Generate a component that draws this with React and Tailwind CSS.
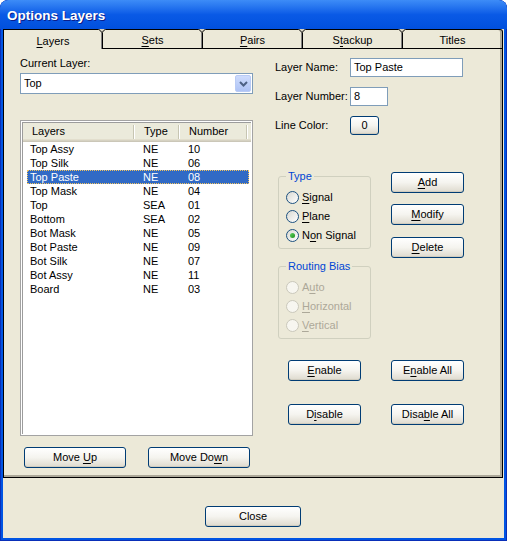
import React from "react";

const U = ({ children }) => (
  <span className="underline decoration-1 underline-offset-[2px]">{children}</span>
);

function Btn({ className = "", children }) {
  return (
    <div
      className={`flex items-center justify-center rounded-[3px] border border-[#003c74] bg-linear-to-b from-white via-[#f5f4ef] to-[#dedace] text-black shadow-[inset_0_-1px_0_#d0ccbf] ${className}`}
    >
      {children}
    </div>
  );
}

function Radio({ checked, disabled, label }) {
  return (
    <div className="flex h-[19px] items-center">
      <div
        className={`flex h-[13px] w-[13px] items-center justify-center rounded-full border ${
          disabled
            ? "border-[#cac8bb] bg-[#f7f6f0]"
            : "border-[#1c5180] bg-linear-to-br from-[#d9d9d2] to-white"
        }`}
      >
        {checked && (
          <div className="h-[5px] w-[5px] rounded-full bg-linear-to-br from-[#5fd35f] to-[#1a8f1a]" />
        )}
      </div>
      <span className={`ml-[3px] leading-[13px] ${disabled ? "text-[#aca899]" : "text-black"}`}>
        {label}
      </span>
    </div>
  );
}

function Group({ title, children }) {
  return (
    <fieldset className="rounded-[3px] border border-[#d0d0bf] px-[7px] pb-[3px]">
      <legend className="px-[2px] leading-[13px] text-[#0046d5]">{title}</legend>
      <div className="pt-[5px]">{children}</div>
    </fieldset>
  );
}

function Notch({ className }) {
  return (
    <svg
      className={`absolute top-0 ${className}`}
      width="8"
      height="5"
      viewBox="0 0 8 5"
    >
      <path d="M0 0 L4 4 L8 0 Z" fill="#d8d4c4" />
      <path d="M0.5 0 L4 3.5 L7.5 0" stroke="#000" strokeWidth="1" fill="none" />
    </svg>
  );
}

const rows = [
  ["Top Assy", "NE", "10"],
  ["Top Silk", "NE", "06"],
  ["Top Paste", "NE", "08"],
  ["Top Mask", "NE", "04"],
  ["Top", "SEA", "01"],
  ["Bottom", "SEA", "02"],
  ["Bot Mask", "NE", "05"],
  ["Bot Paste", "NE", "09"],
  ["Bot Silk", "NE", "07"],
  ["Bot Assy", "NE", "11"],
  ["Board", "NE", "03"],
];

function HeaderCell({ w, label }) {
  return (
    <div className={`flex items-center justify-between ${w}`}>
      <span className="pl-[9px] pb-[2px]">{label}</span>
      <div className="mb-[2px] h-[14px] w-[2px] border-l border-[#c7c5b2] bg-white" />
    </div>
  );
}

export default function App() {
  return (
    <div className="flex h-[541px] w-[507px] flex-col overflow-hidden rounded-t-[8px] bg-[#0054e3] font-['Liberation_Sans',Arial,sans-serif] text-[11px] text-black shadow-[inset_0_0_0_1px_#0a2fb8]">
      {/* Title bar */}
      <div className="h-[29px] shrink-0 rounded-t-[8px] bg-linear-to-b from-[#3d8cf7] via-[#0a5ae6] to-[#0150dd] pl-[7px] pt-[7px]">
        <span className="text-[13.5px] font-bold leading-[17px] text-white [text-shadow:1px_1px_0_#0a1e8a]">
          Options Layers
        </span>
      </div>

      {/* Client */}
      <div className="mx-[3px] mb-[3px] flex flex-1 flex-col bg-[#ece9d8]">
        {/* Tabs */}
        <div className="relative flex h-[20px] w-[500px] shrink-0">
          <div className="flex w-[100px] items-center justify-center border-l border-r border-t border-black pt-[3px] shadow-[inset_-1px_0_0_#808080]">
            <U>L</U>ayers
          </div>
          <div className="flex w-[100px] items-center justify-center border-b border-r border-t border-black pt-[2px] shadow-[inset_-1px_0_0_#808080]">
            <U>S</U>ets
          </div>
          <div className="flex w-[100px] items-center justify-center border-b border-r border-t border-black pt-[2px] shadow-[inset_-1px_0_0_#808080]">
            <U>P</U>airs
          </div>
          <div className="flex w-[100px] items-center justify-center border-b border-r border-t border-black pt-[2px] shadow-[inset_-1px_0_0_#808080]">
            S<U>t</U>ackup
          </div>
          <div className="flex w-[100px] items-center justify-center rounded-tr-[3px] border-b border-r border-t border-black pt-[2px] shadow-[inset_-2px_0_0_#aca899]">
            Titles
          </div>
          <Notch className="left-[95px]" />
          <Notch className="left-[195px]" />
          <Notch className="left-[295px]" />
          <Notch className="left-[395px]" />
        </div>

        {/* Panel */}
        <div className="flex h-[429px] w-[500px] shrink-0 border-x border-b border-black shadow-[inset_-2px_-2px_0_#aca899]">
          {/* Left column */}
          <div className="ml-[16px] flex w-[233px] flex-col pt-[8px]">
            <div className="leading-[13px]">Current Layer:</div>
            <div className="mt-[3px] flex h-[21px] items-center border border-[#7f9db9] bg-white pl-[3px] pr-px">
              <span className="flex-1">Top</span>
              <div className="flex h-[17px] w-[16px] items-center justify-center rounded-[2px] border border-[#b9cbf5] bg-linear-to-b from-[#cedcfd] to-[#aec3f5]">
                <svg width="9" height="6" viewBox="0 0 9 6">
                  <path d="M1 1 L4.5 4.5 L8 1" stroke="#4d6185" strokeWidth="2" fill="none" />
                </svg>
              </div>
            </div>

            <div className="mt-[26px] h-[316px] border border-[#a3a3a3] bg-white p-px">
              <div className="h-full border-l border-t border-[#9c9c9c]">
                <div className="flex h-[19px] bg-[#ebeadb] shadow-[inset_0_-1px_0_#cbc7b8,inset_0_-2px_0_#d6d2c2,inset_0_-3px_0_#e2decd]">
                  <HeaderCell w="w-[112px]" label="Layers" />
                  <HeaderCell w="w-[45px]" label="Type" />
                  <HeaderCell w="w-[68px]" label="Number" />
                </div>
                <div className="pl-[4px]">
                  {rows.map(([name, type, num], i) => {
                    const sel = i === 2;
                    return (
                      <div
                        key={name}
                        className={`flex h-[14px] w-[222px] pl-[3px] leading-[14px] ${
                          sel
                            ? "bg-[#316ac5] text-white outline-1 -outline-offset-1 outline-dotted outline-[#f3c35c]"
                            : ""
                        }`}
                      >
                        <span className="w-[113px]">{name}</span>
                        <span className="w-[45px]">{type}</span>
                        <span>{num}</span>
                      </div>
                    );
                  })}
                </div>
              </div>
            </div>

            <div className="mt-[11px] flex gap-[22px] pl-[4px]">
              <Btn className="h-[21px] w-[102px]">
                Move&nbsp;<U>U</U>p
              </Btn>
              <Btn className="h-[21px] w-[102px]">
                Move Do<U>w</U>n
              </Btn>
            </div>
          </div>

          {/* Right column */}
          <div className="ml-[22px] flex flex-col pt-[9px]">
            <div className="flex h-[19px] items-center">
              <span className="w-[75px]">Layer Name:</span>
              <div className="flex h-[19px] w-[113px] items-center border border-[#7f9db9] bg-white pl-[3px]">
                Top Paste
              </div>
            </div>
            <div className="mt-[10px] flex h-[19px] items-center">
              <span className="w-[75px]">Layer Number:</span>
              <div className="flex h-[19px] w-[38px] items-center border border-[#7f9db9] bg-white pl-[3px]">
                8
              </div>
            </div>
            <div className="mt-[10px] flex h-[19px] items-center">
              <span className="w-[75px]">Line Color:</span>
              <Btn className="h-[19px] w-[29px]">0</Btn>
            </div>

            <div className="mt-[35px] flex">
              <div className="ml-[3px] flex w-[93px] flex-col">
                <Group title="Type">
                  <Radio label={<><U>S</U>ignal</>} />
                  <Radio label={<><U>P</U>lane</>} />
                  <Radio checked label={<>N<U>o</U>n Signal</>} />
                </Group>
                <div className="mt-[11px]">
                  <Group title="Routing Bias">
                    <Radio disabled label={<>A<U>u</U>to</>} />
                    <Radio disabled label={<><U>H</U>orizontal</>} />
                    <Radio disabled label={<><U>V</U>ertical</>} />
                  </Group>
                </div>
              </div>
              <div className="ml-[20px] flex w-[73px] flex-col pt-[2px]">
                <Btn className="h-[21px]">
                  <U>A</U>dd
                </Btn>
                <Btn className="mt-[11px] h-[21px]">
                  <U>M</U>odify
                </Btn>
                <Btn className="mt-[12px] h-[21px]">
                  <U>D</U>elete
                </Btn>
              </div>
            </div>

            <div className="mt-[21px] flex gap-[30px] pl-[13px]">
              <Btn className="h-[21px] w-[73px]">
                <U>E</U>nable
              </Btn>
              <Btn className="h-[21px] w-[73px]">
                E<U>n</U>able All
              </Btn>
            </div>
            <div className="mt-[23px] flex gap-[30px] pl-[13px]">
              <Btn className="h-[21px] w-[73px]">
                D<U>i</U>sable
              </Btn>
              <Btn className="h-[21px] w-[73px]">
                Disa<U>b</U>le All
              </Btn>
            </div>
          </div>
        </div>

        {/* Footer */}
        <div className="flex-1 pl-[202px] pt-[28px]">
          <Btn className="h-[21px] w-[96px]">Close</Btn>
        </div>
      </div>
    </div>
  );
}
